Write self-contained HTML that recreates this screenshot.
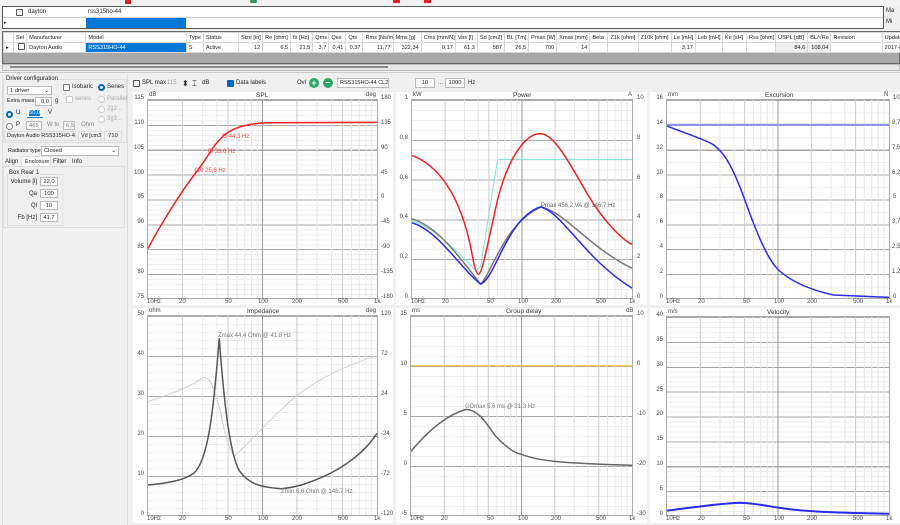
<!DOCTYPE html><html><head><meta charset="utf-8"><style>
*{box-sizing:border-box;margin:0;padding:0}
body{width:900px;height:525px;overflow:hidden;background:#f0f0f0;font-family:"Liberation Sans",sans-serif;font-size:6px;color:#222;position:relative}
.a{position:absolute;white-space:nowrap}
.pn{position:absolute;background:#fff}
.pl{position:absolute;border:1px solid #aaa;background-color:#fff}
.pl svg{position:absolute;left:0;top:0;width:100%;height:100%;overflow:visible}
.lb{position:absolute;font-size:6px;color:#444;white-space:nowrap}
.r{text-align:right;width:20px}
.t{position:absolute;font-size:6.5px;color:#333}
table{border-collapse:collapse;table-layout:fixed;position:absolute}
td{border:1px solid #d8d8d8;height:10px;font-size:5.6px;padding:0 2px;overflow:hidden;white-space:nowrap}
.bx{position:absolute;background:#fff;border:1px solid #bbb;font-size:5.8px;padding:0 2px;height:9px;line-height:8px;white-space:nowrap;overflow:hidden}
.cb{position:absolute;width:7px;height:7px;border:1px solid #555;background:#fff;border-radius:1px}
.rd{position:absolute;width:7px;height:7px;border:1px solid #888;border-radius:50%;background:#fff}
.rd.on{border:2px solid #0067c0}
</style></head><body>
<!-- toolbar -->
<div class="a" style="left:0;top:0;width:900px;height:6px;background:#f3f3f3"></div>
<div class="a" style="left:125px;top:0;width:6px;height:4px;background:#d22"></div>
<div class="a" style="left:250px;top:0;width:7px;height:3px;background:#2a9d5a;border-radius:2px"></div>
<div class="a" style="left:393px;top:0;width:7px;height:3px;background:#d22"></div>
<div class="a" style="left:424px;top:0;width:7px;height:3px;background:#d22"></div>
<!-- filter rows -->
<div class="a" style="left:2px;top:6px;width:882px;height:23px;border:1px solid #555;background:#fff"></div>
<div class="a" style="left:3px;top:17px;width:880px;height:1px;background:#ccc"></div>
<div class="a" style="left:86px;top:18px;width:100px;height:10px;background:#0078d7"></div>
<div class="cb" style="left:16px;top:9px"></div>
<div class="a" style="left:28px;top:9px">dayton</div>
<div class="a" style="left:88px;top:9px">rss315ho-44</div>
<div class="a" style="left:4px;top:20px;font-size:5px">▸</div>
<div class="a" style="left:886px;top:8px">Ma</div><div class="a" style="left:886px;top:19px">Mi</div>
<!-- main table -->
<div class="a" style="left:2px;top:31px;width:898px;height:33px;background:#a8a8a8;border:1px solid #666"></div>
<table style="left:3px;top:32px;width:910px">
<colgroup><col style="width:10px"><col style="width:13px"><col style="width:59px"><col style="width:100px"><col style="width:17px"><col style="width:35px"><col style="width:24px"><col style="width:28px"><col style="width:22px"><col style="width:16px"><col style="width:17px"><col style="width:17px"><col style="width:30px"><col style="width:28px"><col style="width:34px"><col style="width:22px"><col style="width:27px"><col style="width:24px"><col style="width:28px"><col style="width:33px"><col style="width:18px"><col style="width:30px"><col style="width:33px"><col style="width:24px"><col style="width:27px"><col style="width:24px"><col style="width:29px"><col style="width:32px"><col style="width:23px"><col style="width:51px"><col style="width:30px"></colgroup>
<tr style="background:#fff"><td></td><td>Sel</td><td>Manufacturer</td><td>Model</td><td>Type</td><td>Status</td><td>Size [in]</td><td>Re [ohm]</td><td>fs [Hz]</td><td>Qms</td><td>Qes</td><td>Qts</td><td>Rms [Ns/m]</td><td>Mms [g]</td><td>Cms [mm/N]</td><td>Vas [l]</td><td>Sd [cm2]</td><td>BL [Tm]</td><td>Pmax [W]</td><td>Xmax [mm]</td><td>Beta</td><td>Z1k [ohm]</td><td>Z10k [ohm]</td><td>Le [mH]</td><td>Leb [mH]</td><td>Ke [sH]</td><td>Rss [ohm]</td><td>USPL [dB]</td><td>BL/√Re</td><td>Revision</td><td>Updated</td></tr>
<tr style="background:#fff;text-align:right"><td style="text-align:left">▸</td><td></td><td style="text-align:left">Dayton Audio</td><td style="text-align:left;background:#0078d7;color:#fff">RSS315HO-44</td><td style="text-align:left">S</td><td style="text-align:left">Active</td><td>12</td><td>6,5</td><td>21,5</td><td>3,7</td><td>0,41</td><td>0,37</td><td>11,77</td><td>322,34</td><td>0,17</td><td>61,3</td><td>587</td><td>26,5</td><td>700</td><td>14</td><td></td><td></td><td></td><td>3,17</td><td></td><td></td><td></td><td style="background:#eee">84,6</td><td style="background:#eee">108,04</td><td></td><td style="text-align:left">2017-06-0</td></tr>
</table>
<div class="cb" style="left:18px;top:43px"></div>
<div class="a" style="left:2px;top:64px;width:898px;height:7px;background:#e8e8e8;border:1px solid #bbb"></div>
<div class="a" style="left:10px;top:66px;width:378px;height:2px;background:#888"></div>
<div class="a" style="left:0;top:72px;width:900px;height:1px;background:#ccc"></div>
<!-- left panel -->
<div class="a" style="left:2px;top:75px;width:126px;height:450px;border-left:1px solid #ddd;border-right:1px solid #ddd"></div>
<div class="a" style="left:3px;top:79px;width:124px;height:64px;border:1px solid #ddd"></div>
<div class="a" style="left:6px;top:76px;background:#f0f0f0">Driver configuration</div>
<div class="bx" style="left:7px;top:86px;width:45px;background:#fff">1 driver <span style="float:right">⌄</span></div>
<div class="cb" style="left:63px;top:84px;border-color:#777"></div><div class="a" style="left:72px;top:84px">Isobaric</div>
<div class="rd on" style="left:98px;top:84px"></div><div class="a" style="left:107px;top:84px">Series</div>
<div class="cb" style="left:66px;top:96px;border-color:#ccc"></div><div class="a" style="left:75px;top:96px;color:#aaa">series</div>
<div class="rd" style="left:98px;top:96px;border-color:#ccc"></div><div class="a" style="left:107px;top:96px;color:#aaa">Parallel</div>
<div class="rd" style="left:98px;top:106px;border-color:#ccc"></div><div class="a" style="left:107px;top:106px;color:#aaa">2||2 ..</div>
<div class="rd" style="left:98px;top:116px;border-color:#ccc"></div><div class="a" style="left:107px;top:116px;color:#aaa">3||3 ..</div>
<div class="a" style="left:7px;top:98px;font-size:5.5px">Extra mass</div><div class="bx" style="left:35px;top:97px;width:17px;text-align:right">0,0</div><div class="a" style="left:55px;top:98px">g</div>
<div class="rd on" style="left:6px;top:111px"></div><div class="a" style="left:16px;top:110px">U</div>
<div class="bx" style="left:27px;top:109px;width:16px;border:none;border-bottom:1px solid #0078d7"><span style="background:#0078d7;color:#fff">50,0</span></div><div class="a" style="left:48px;top:110px">V</div>
<div class="rd" style="left:6px;top:123px"></div><div class="a" style="left:16px;top:122px">P</div>
<div class="bx" style="left:26px;top:121px;width:16px;color:#888;background:#f4f4f4">465</div><div class="a" style="left:47px;top:122px;color:#888">W to</div>
<div class="bx" style="left:63px;top:121px;width:12px;color:#888;background:#f4f4f4">6,5</div><div class="a" style="left:81px;top:122px;color:#888">Ohm</div>
<div class="bx" style="left:4px;top:131px;width:72px;height:10px;background:#f0f0f0;border-color:#ddd;font-size:5.5px">Dayton Audio RSS315HO-44</div>
<div class="bx" style="left:78px;top:131px;width:24px;height:10px;background:#f0f0f0;border-color:#ddd;font-size:5.5px">Vd [cm3]</div>
<div class="bx" style="left:104px;top:131px;width:18px;height:10px;background:#f0f0f0;border-color:#ddd;text-align:center">710</div>
<div class="a" style="left:8px;top:148px;font-size:5.5px">Radiator type</div>
<div class="bx" style="left:41px;top:146px;width:78px;height:10px">Closed <span style="float:right">⌄</span></div>
<div class="a" style="left:5px;top:159px">Align</div>
<div class="a" style="left:21px;top:156px;width:30px;height:10px;background:#fff;border:1px solid #ddd;border-bottom:none;padding:2px 0 0 3px;font-size:5.5px">Enclosure</div>
<div class="a" style="left:53px;top:159px">Filter</div><div class="a" style="left:72px;top:159px">Info</div>
<div class="a" style="left:3px;top:166px;width:122px;height:62px;border:1px solid #ddd"></div>
<div class="a" style="left:7px;top:174px;width:56px;height:52px;border:1px solid #ddd"></div>
<div class="a" style="left:9px;top:170px;background:#f0f0f0">Box Rear 1</div>
<div class="a" style="left:10px;top:179px;width:27px;text-align:right">Volume [l]</div><div class="bx" style="left:40px;top:177px;width:18px;text-align:center">22,0</div>
<div class="a" style="left:10px;top:191px;width:27px;text-align:right">Qa</div><div class="bx" style="left:40px;top:189px;width:18px;text-align:center">100</div>
<div class="a" style="left:10px;top:203px;width:27px;text-align:right">Ql</div><div class="bx" style="left:40px;top:201px;width:18px;text-align:center">10</div>
<div class="a" style="left:10px;top:215px;width:27px;text-align:right">Fb [Hz]</div><div class="bx" style="left:40px;top:213px;width:18px;text-align:center">41,7</div>
<!-- controls row -->
<div class="cb" style="left:133px;top:80px"></div><div class="a" style="left:142px;top:80px">SPL max</div>
<div class="a" style="left:167px;top:80px;color:#999">115</div>
<div class="a" style="left:182px;top:79px;font-size:8px">⬍</div><div class="a" style="left:192px;top:79px;font-size:8px">⌶</div><div class="a" style="left:202px;top:80px">dB</div>
<div class="cb" style="left:227px;top:80px;background:#0067c0;border-color:#0067c0"></div><div class="a" style="left:236px;top:80px">Data labels</div>
<div class="a" style="left:297px;top:80px">Ovl</div>
<div class="a" style="left:309px;top:78px;width:10px;height:10px;border-radius:50%;background:#2fa564;color:#fff;font-size:9px;line-height:10px;text-align:center;font-weight:bold">+</div>
<div class="a" style="left:323px;top:78px;width:10px;height:10px;border-radius:50%;background:#2fa564;color:#fff;font-size:9px;line-height:9px;text-align:center;font-weight:bold">–</div>
<div class="bx" style="left:337px;top:78px;width:52px;height:10px;font-size:5.5px">RSS315HO-44 CL22,0</div>
<div class="bx" style="left:415px;top:78px;width:20px;height:10px;text-align:center">10</div><div class="a" style="left:438px;top:80px">...</div>
<div class="bx" style="left:445px;top:78px;width:20px;height:10px;text-align:center">1000</div><div class="a" style="left:468px;top:80px">Hz</div>
<!-- panels -->
<div class="pn" style="left:133px;top:92px;width:260px;height:213px"></div>
<div class="pn" style="left:396px;top:92px;width:251px;height:213px"></div>
<div class="pn" style="left:650px;top:92px;width:250px;height:213px"></div>
<div class="pn" style="left:133px;top:308px;width:260px;height:215px"></div>
<div class="pn" style="left:396px;top:308px;width:251px;height:215px"></div>
<div class="pn" style="left:650px;top:308px;width:250px;height:215px"></div>

<svg width="0" height="0" style="position:absolute"><defs>
<g id="vg"><path vector-effect="non-scaling-stroke" stroke="#e6e6e6" fill="none" d="M150.5,0V1000M238.6,0V1000M301,0V1000M349.5,0V1000M389,0V1000M422.5,0V1000M451.5,0V1000M477,0V1000M650.5,0V1000M738.6,0V1000M801,0V1000M849.5,0V1000M889,0V1000M922.5,0V1000M951.5,0V1000M977,0V1000"/>
<path vector-effect="non-scaling-stroke" stroke="#cfcfcf" fill="none" d="M150.5,0V1000M349.5,0V1000M650.5,0V1000M849.5,0V1000"/>
<path vector-effect="non-scaling-stroke" stroke="#999" fill="none" d="M500,0V1000"/></g></defs></svg>

<!-- SPL -->
<div class="pl" style="left:147px;top:99px;width:231px;height:200px;background-image:repeating-linear-gradient(#a8a8a8 0 1px,transparent 1px 24.875px),repeating-linear-gradient(#eeeeee 0 1px,transparent 1px 4.975px)">
<svg viewBox="0 0 1000 1000" preserveAspectRatio="none"><use href="#vg"/>
<path vector-effect="non-scaling-stroke" stroke="#f02020" stroke-width="1.5" fill="none" d="M0,750 C50,640 140,470 204,375 S285,225 330,180 S440,118 520,115 L1000,113"/></svg></div>
<div class="t" style="left:256px;top:92px">SPL</div><div class="lb" style="left:149px;top:92px">dB</div><div class="lb" style="left:366px;top:92px">deg</div>
<div class="lb" style="left:195px;top:168px;color:#f04040">f10 25,6 Hz</div>
<div class="lb" style="left:208px;top:149px;color:#f04040">f6 33,6 Hz</div>
<div class="lb" style="left:222px;top:134px;color:#f04040">f3 44,3 Hz</div>
<!-- Power -->
<div class="pl" style="left:411px;top:99px;width:222px;height:200px;background-image:repeating-linear-gradient(#a8a8a8 0 1px,transparent 1px 39.8px),repeating-linear-gradient(#eeeeee 0 1px,transparent 1px 9.95px)">
<svg viewBox="0 0 1000 1000" preserveAspectRatio="none"><use href="#vg"/>
<path vector-effect="non-scaling-stroke" stroke="#7fe3da" stroke-width="1" fill="none" d="M0,610 C120,650 230,800 290,860 L312,840 L389,300 L1000,300"/>
<path vector-effect="non-scaling-stroke" stroke="#777" stroke-width="1.5" fill="none" d="M0,600 C120,640 220,800 312,930 C360,880 420,620 588,540 C700,570 800,740 1000,850"/>
<path vector-effect="non-scaling-stroke" stroke="#2a2af0" stroke-width="1.5" fill="none" d="M0,620 C120,660 220,850 312,930 C380,900 430,600 582,540 C680,560 780,800 1000,950"/>
<path vector-effect="non-scaling-stroke" stroke="#f02020" stroke-width="1.5" fill="none" d="M0,280 C120,330 220,480 270,760 C285,860 295,880 301,880 C320,880 340,740 390,500 C440,280 520,170 582,170 C650,170 720,330 800,480 C870,610 950,700 1000,730"/></svg></div>
<div class="t" style="left:513px;top:92px">Power</div><div class="lb" style="left:413px;top:92px">kW</div><div class="lb" style="left:628px;top:92px">A</div>
<div class="lb" style="left:541px;top:203px;color:#666">Pmax 456,2 VA @ 146,7 Hz</div>
<!-- Excursion -->
<div class="pl" style="left:666px;top:99px;width:224px;height:200px;background-image:repeating-linear-gradient(#a8a8a8 0 1px,transparent 1px 24.875px),repeating-linear-gradient(#eeeeee 0 1px,transparent 1px 12.44px)">
<svg viewBox="0 0 1000 1000" preserveAspectRatio="none"><use href="#vg"/>
<path vector-effect="non-scaling-stroke" stroke="#8f8ff5" stroke-width="2" fill="none" d="M0,125H1000"/>
<path vector-effect="non-scaling-stroke" stroke="#2a2af0" stroke-width="1.5" fill="none" d="M0,131 C60,160 150,190 200,220 C260,260 300,350 349,500 C400,660 450,800 500,856 C560,920 650,960 750,985 L1000,997"/></svg></div>
<div class="t" style="left:765px;top:92px">Excursion</div><div class="lb" style="left:668px;top:92px">mm</div><div class="lb" style="left:884px;top:92px">N</div>
<!-- Impedance -->
<div class="pl" style="left:147px;top:315px;width:231px;height:201px;background-image:repeating-linear-gradient(#a8a8a8 0 1px,transparent 1px 40px),repeating-linear-gradient(#eeeeee 0 1px,transparent 1px 8px)">
<svg viewBox="0 0 1000 1000" preserveAspectRatio="none"><use href="#vg"/>
<path vector-effect="non-scaling-stroke" stroke="#cfcfcf" stroke-width="1" fill="none" d="M0,430 C80,400 180,360 240,310 C270,300 290,360 320,500 C340,620 360,700 381,700 C420,660 500,560 600,450 C700,340 850,250 1000,200"/>
<path vector-effect="non-scaling-stroke" stroke="#555" stroke-width="1.5" fill="none" d="M0,850 C80,840 150,830 200,790 C260,730 285,500 311,112 C335,480 360,700 400,780 C440,840 480,860 582,868 C650,860 700,840 760,810 C860,760 950,680 1000,590"/></svg></div>
<div class="t" style="left:247px;top:308px">Impedance</div><div class="lb" style="left:149px;top:308px">ohm</div><div class="lb" style="left:366px;top:308px">deg</div>
<div class="lb" style="left:218px;top:333px;color:#777">Zmax 44,4 Ohm @ 41,8 Hz</div>
<div class="lb" style="left:281px;top:489px;color:#777">Zmin 6,6 Ohm @ 146,7 Hz</div>
<!-- Group delay -->
<div class="pl" style="left:410px;top:315px;width:223px;height:201px;background-image:repeating-linear-gradient(#a8a8a8 0 1px,transparent 1px 50px),repeating-linear-gradient(#eeeeee 0 1px,transparent 1px 10px)">
<svg viewBox="0 0 1000 1000" preserveAspectRatio="none"><use href="#vg"/>
<path vector-effect="non-scaling-stroke" stroke="#f0c040" stroke-width="1.2" fill="none" d="M0,250H1000"/>
<path vector-effect="non-scaling-stroke" stroke="#666" stroke-width="1.5" fill="none" d="M0,680 C60,600 150,500 248,470 C300,470 330,520 380,600 C430,660 470,690 500,695 C570,725 650,740 1000,750"/></svg></div>
<div class="t" style="left:506px;top:308px">Group delay</div><div class="lb" style="left:412px;top:308px">ms</div><div class="lb" style="left:626px;top:308px">dB</div>
<div class="lb" style="left:465px;top:404px;color:#777">GDmax 5,6 ms @ 31,3 Hz</div>
<!-- Velocity -->
<div class="pl" style="left:666px;top:316px;width:224px;height:200px;background-image:repeating-linear-gradient(#a8a8a8 0 1px,transparent 1px 24.875px),repeating-linear-gradient(#eeeeee 0 1px,transparent 1px 4.975px)">
<svg viewBox="0 0 1000 1000" preserveAspectRatio="none"><use href="#vg"/>
<path vector-effect="non-scaling-stroke" stroke="#2a2af0" stroke-width="2" fill="none" d="M0,978 C80,968 200,945 327,938 C400,940 450,955 500,963 C600,980 700,988 1000,994"/></svg></div>
<div class="t" style="left:767px;top:309px">Velocity</div><div class="lb" style="left:668px;top:309px">m/s</div>

<!-- axis labels -->
<div class="lb r" style="left:124px;top:95px">115</div><div class="lb r" style="left:124px;top:120px">110</div><div class="lb r" style="left:124px;top:145px">105</div><div class="lb r" style="left:124px;top:170px">100</div><div class="lb r" style="left:124px;top:194px">95</div><div class="lb r" style="left:124px;top:219px">90</div><div class="lb r" style="left:124px;top:244px">85</div><div class="lb r" style="left:124px;top:269px">80</div><div class="lb r" style="left:124px;top:294px">75</div>
<div class="lb" style="left:381px;top:95px">180</div><div class="lb" style="left:381px;top:120px">135</div><div class="lb" style="left:381px;top:145px">90</div><div class="lb" style="left:381px;top:170px">45</div><div class="lb" style="left:381px;top:194px">0</div><div class="lb" style="left:381px;top:219px">-45</div><div class="lb" style="left:381px;top:244px">-90</div><div class="lb" style="left:381px;top:269px">-135</div><div class="lb" style="left:381px;top:294px">-180</div>
<div class="lb r" style="left:388px;top:95px">1</div><div class="lb r" style="left:388px;top:135px">0,8</div><div class="lb r" style="left:388px;top:175px">0,6</div><div class="lb r" style="left:388px;top:214px">0,4</div><div class="lb r" style="left:388px;top:254px">0,2</div><div class="lb r" style="left:388px;top:294px">0</div>
<div class="lb" style="left:637px;top:95px">10</div><div class="lb" style="left:637px;top:135px">8</div><div class="lb" style="left:637px;top:175px">6</div><div class="lb" style="left:637px;top:214px">4</div><div class="lb" style="left:637px;top:254px">2</div><div class="lb" style="left:637px;top:294px">0</div>
<div class="lb r" style="left:643px;top:95px">16</div><div class="lb r" style="left:643px;top:120px">14</div><div class="lb r" style="left:643px;top:145px">12</div><div class="lb r" style="left:643px;top:170px">10</div><div class="lb r" style="left:643px;top:194px">8</div><div class="lb r" style="left:643px;top:219px">6</div><div class="lb r" style="left:643px;top:244px">4</div><div class="lb r" style="left:643px;top:269px">2</div><div class="lb r" style="left:643px;top:294px">0</div>
<div class="lb" style="left:893px;top:95px">10</div><div class="lb" style="left:892px;top:120px">8,75</div><div class="lb" style="left:892px;top:145px">7,5</div><div class="lb" style="left:892px;top:170px">6,25</div><div class="lb" style="left:893px;top:194px">5</div><div class="lb" style="left:892px;top:219px">3,75</div><div class="lb" style="left:892px;top:244px">2,5</div><div class="lb" style="left:892px;top:269px">1,25</div><div class="lb" style="left:893px;top:294px">0</div>
<div class="lb r" style="left:124px;top:311px">50</div><div class="lb r" style="left:124px;top:351px">40</div><div class="lb r" style="left:124px;top:391px">30</div><div class="lb r" style="left:124px;top:431px">20</div><div class="lb r" style="left:124px;top:471px">10</div><div class="lb r" style="left:124px;top:511px">0</div>
<div class="lb" style="left:381px;top:311px">120</div><div class="lb" style="left:381px;top:351px">72</div><div class="lb" style="left:381px;top:391px">24</div><div class="lb" style="left:381px;top:431px">-24</div><div class="lb" style="left:381px;top:471px">-72</div><div class="lb" style="left:381px;top:511px">-120</div>
<div class="lb r" style="left:387px;top:311px">15</div><div class="lb r" style="left:387px;top:361px">10</div><div class="lb r" style="left:387px;top:411px">5</div><div class="lb r" style="left:387px;top:461px">0</div><div class="lb r" style="left:387px;top:511px">-5</div>
<div class="lb" style="left:637px;top:311px">10</div><div class="lb" style="left:637px;top:361px">0</div><div class="lb" style="left:637px;top:411px">-10</div><div class="lb" style="left:637px;top:461px">-20</div><div class="lb" style="left:637px;top:511px">-30</div>
<div class="lb r" style="left:643px;top:312px">40</div><div class="lb r" style="left:643px;top:337px">35</div><div class="lb r" style="left:643px;top:362px">30</div><div class="lb r" style="left:643px;top:387px">25</div><div class="lb r" style="left:643px;top:411px">20</div><div class="lb r" style="left:643px;top:436px">15</div><div class="lb r" style="left:643px;top:461px">10</div><div class="lb r" style="left:643px;top:486px">5</div><div class="lb r" style="left:643px;top:511px">0</div>
<!-- x labels -->
<div class="lb" style="left:147px;top:299px">10Hz</div><div class="lb" style="left:179px;top:299px">20</div><div class="lb" style="left:225px;top:299px">50</div><div class="lb" style="left:258px;top:299px">100</div><div class="lb" style="left:292px;top:299px">200</div><div class="lb" style="left:338px;top:299px">500</div><div class="lb" style="left:374px;top:299px">1k</div>
<div class="lb" style="left:411px;top:299px">10Hz</div><div class="lb" style="left:442px;top:299px">20</div><div class="lb" style="left:487px;top:299px">50</div><div class="lb" style="left:518px;top:299px">100</div><div class="lb" style="left:551px;top:299px">200</div><div class="lb" style="left:596px;top:299px">500</div><div class="lb" style="left:629px;top:299px">1k</div>
<div class="lb" style="left:666px;top:299px">10Hz</div><div class="lb" style="left:698px;top:299px">20</div><div class="lb" style="left:743px;top:299px">50</div><div class="lb" style="left:774px;top:299px">100</div><div class="lb" style="left:807px;top:299px">200</div><div class="lb" style="left:853px;top:299px">500</div><div class="lb" style="left:886px;top:299px">1k</div>
<div class="lb" style="left:147px;top:516px">10Hz</div><div class="lb" style="left:179px;top:516px">20</div><div class="lb" style="left:225px;top:516px">50</div><div class="lb" style="left:258px;top:516px">100</div><div class="lb" style="left:292px;top:516px">200</div><div class="lb" style="left:338px;top:516px">500</div><div class="lb" style="left:374px;top:516px">1k</div>
<div class="lb" style="left:410px;top:516px">10Hz</div><div class="lb" style="left:441px;top:516px">20</div><div class="lb" style="left:487px;top:516px">50</div><div class="lb" style="left:518px;top:516px">100</div><div class="lb" style="left:551px;top:516px">200</div><div class="lb" style="left:596px;top:516px">500</div><div class="lb" style="left:629px;top:516px">1k</div>
<div class="lb" style="left:666px;top:516px">10Hz</div><div class="lb" style="left:698px;top:516px">20</div><div class="lb" style="left:743px;top:516px">50</div><div class="lb" style="left:774px;top:516px">100</div><div class="lb" style="left:807px;top:516px">200</div><div class="lb" style="left:853px;top:516px">500</div><div class="lb" style="left:886px;top:516px">1k</div>
</body></html>
